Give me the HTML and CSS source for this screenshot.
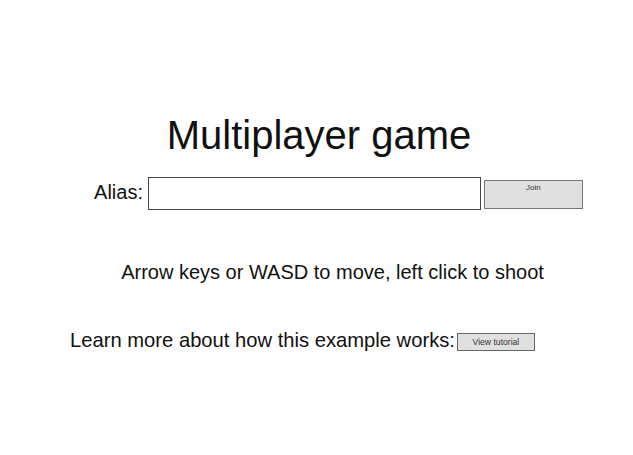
FILE: index.html
```html
<!DOCTYPE html>
<html>
<head>
<meta charset="utf-8">
<link rel="stylesheet" href="styles.css">
</head>
<body>
<main class="page">
  <h1 class="title">Multiplayer game</h1>
  <div class="alias-row">
    <label class="alias-label">Alias:</label>
    <input class="alias-input" type="text">
    <button class="join-btn">Join</button>
  </div>
  <p class="hint">Arrow keys or WASD to move, left click to shoot</p>
  <div class="learn-row">
    <span class="learn-text">Learn more about how this example works:</span>
    <button class="tutorial-btn">View tutorial</button>
  </div>
</main>
</body>
</html>
```
FILE: styles.css
```css
html, body {
  margin: 0;
  padding: 0;
  background: #ffffff;
}
body {
  width: 633px;
  height: 455px;
  font-family: "Liberation Sans", Arial, sans-serif;
  color: #111;
}
.page {
  display: flex;
  flex-direction: column;
  align-items: center;
  padding-top: 112px;
}
.title {
  margin: 0;
  font-size: 40px;
  font-weight: normal;
  line-height: 46px;
  padding-left: 5px;
}
.alias-row {
  display: flex;
  align-items: flex-start;
  margin-top: 19px;
  padding-left: 44px;
}
.alias-label {
  font-size: 20px;
  line-height: 24px;
  margin-top: 3px;
  margin-right: 5px;
}
.alias-input {
  box-sizing: border-box;
  width: 333px;
  height: 33px;
  margin: 0;
  border: 1px solid #444;
  outline: none;
  background: #fff;
}
.join-btn {
  box-sizing: border-box;
  width: 99px;
  height: 29px;
  margin: 3px 0 0 3px;
  padding: 0;
  border: 1px solid #777;
  background: #e0e0e0;
  font-family: "Liberation Sans", Arial, sans-serif;
  font-size: 8px;
  color: #333;
  display: flex;
  justify-content: center;
  align-items: flex-start;
  padding-top: 2px;
}
.hint {
  margin: 50px 0 0 0;
  font-size: 20px;
  line-height: 24px;
  padding-left: 32px;
}
.learn-row {
  display: flex;
  align-items: flex-start;
  margin-top: 44px;
  padding-right: 28px;
}
.learn-text {
  font-size: 20.2px;
  line-height: 24px;
}
.tutorial-btn {
  box-sizing: border-box;
  width: 78px;
  height: 18px;
  margin-left: 2px;
  margin-top: 5px;
  padding: 0;
  border: 1px solid #666;
  background: #e0e0e0;
  font-family: "Liberation Sans", Arial, sans-serif;
  font-size: 8.6px;
  color: #333;
}
```
